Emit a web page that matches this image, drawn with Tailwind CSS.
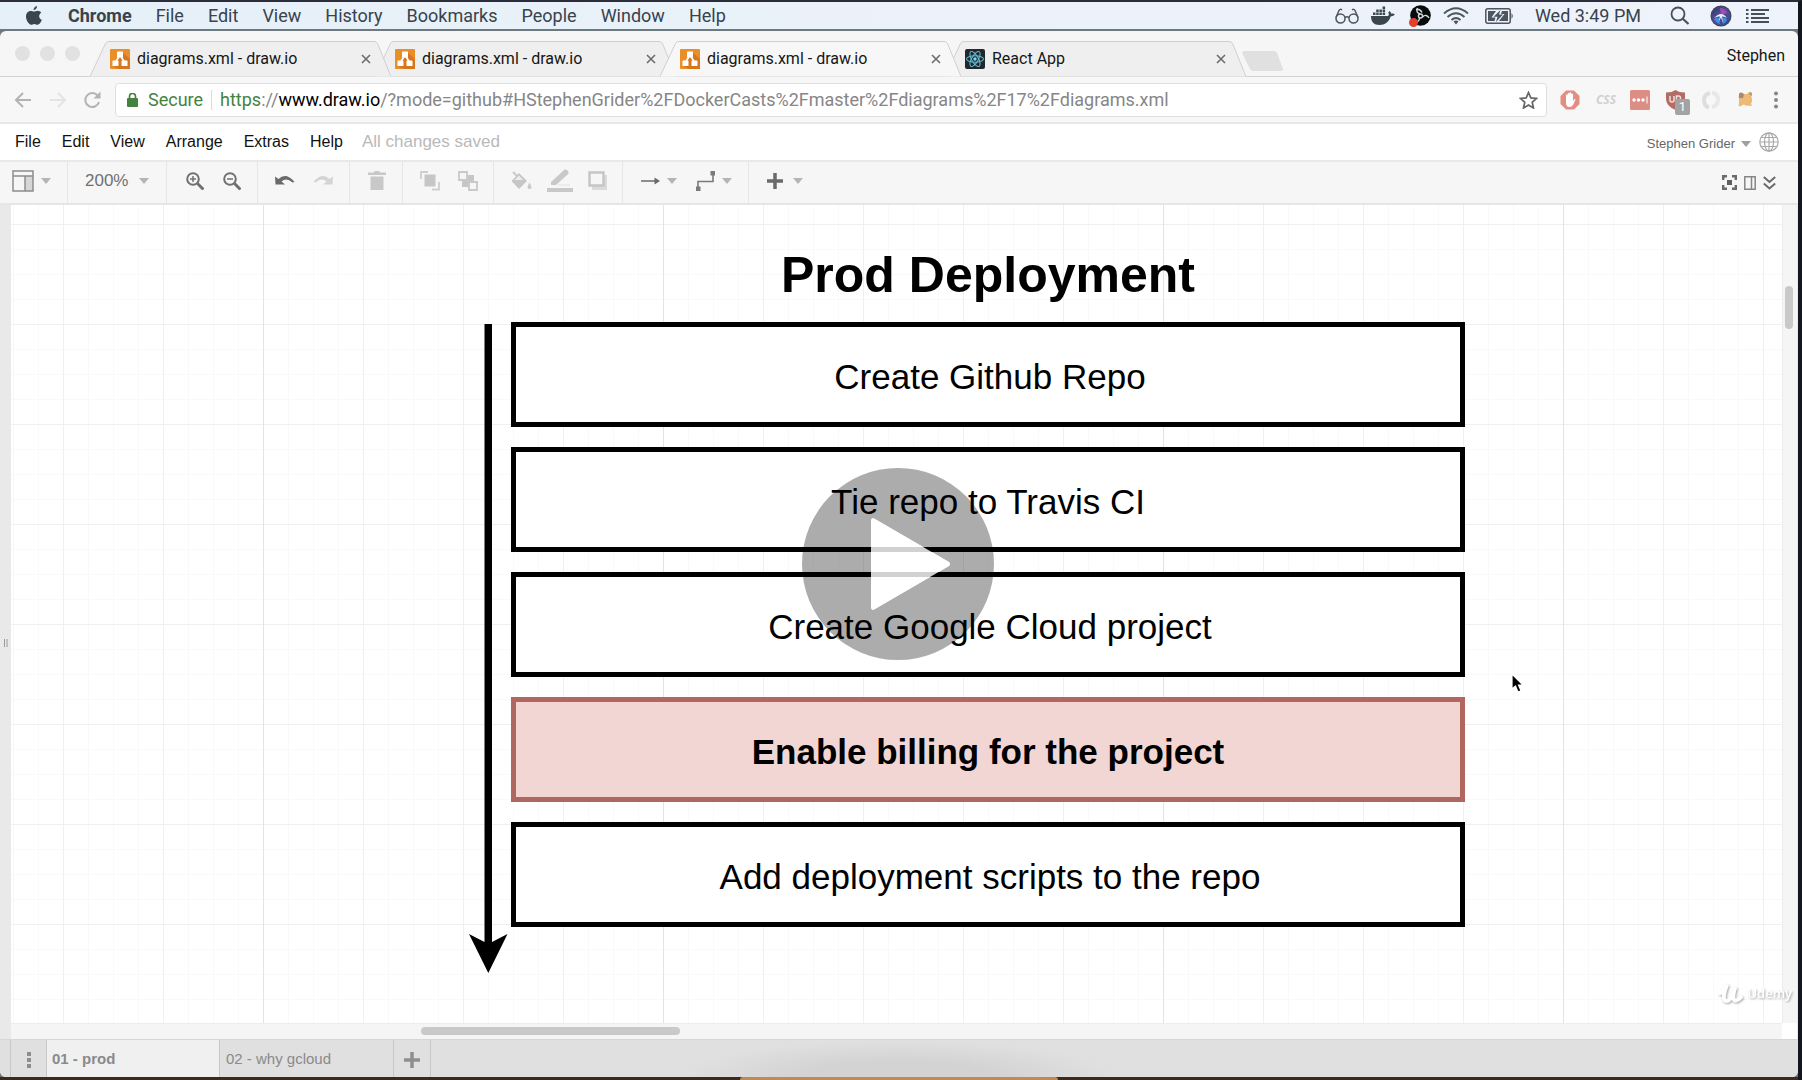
<!DOCTYPE html>
<html lang="en">
<head>
<meta charset="utf-8">
<title>diagrams.xml - draw.io</title>
<script src="https://cdn.jsdelivr.net/npm/@tailwindcss/browser@4"></script>
</head>
<body class="bg-[#12161d]">
<svg class="hidden" aria-hidden="true">
  <defs>
    <symbol id="caret" viewBox="0 0 10 6"><path d="M0 0h10L5 6z" fill="currentColor"/></symbol>
    <symbol id="close" viewBox="0 0 10 10"><path d="M1 1l8 8M9 1l-8 8" stroke="#6b6b6b" stroke-width="1.6"/></symbol>
    <symbol id="drawio" viewBox="0 0 20 20">
      <rect width="20" height="20" rx="1" fill="#ea8e28"/>
      <path d="M12 3l8 7v10H9l-6-3z" fill="#d8761d"/>
      <path d="M10 6L5 14M10 6l5 8" stroke="#fff" stroke-width="1.8"/>
      <rect x="7" y="2.500" width="6" height="6" rx=".6" fill="#fff"/><rect x="2.500" y="11.500" width="6" height="5.500" rx=".6" fill="#fff"/><rect x="11.500" y="11.500" width="6" height="5.500" rx=".6" fill="#fff"/>
    </symbol>
    <symbol id="tab" viewBox="0 0 301 36">
      <path d="M0 35.500L15.500 2.500Q16.500 .5 19 .5H284Q286.500 .5 287.500 2.500L301 35.500" fill="currentColor" stroke="#cfcfcf"/>
    </symbol>
  </defs>
</svg>
<div class="flex min-h-screen flex-col border-t-2 border-r-4 border-t-[#2b2e3a] border-r-[#12161d] bg-[#6c7a80]">

  <!-- System menu bar -->
  <header class="flex h-[27px] items-center bg-linear-to-r from-[#e6f0f8] to-[#eff3fb] pr-7 pl-[26px] font-['Roboto',sans-serif] text-[18px] leading-6 text-[#37434d]">
    <svg class="mr-[26px] h-5 w-4 shrink-0" viewBox="0 0 16 20" fill="#3a464e"><path d="M11 0c.2 2-1.400 4-3.400 4C7.400 2.200 9 .3 11 0zM8 5.600C9 5.600 10 4.800 11.800 4.800c1.300 0 2.600.7 3.400 1.900-3 1.700-2.500 5.900.6 7-.7 2-2.300 5-4.300 5-1.300 0-1.700-.8-3.200-.8s-2 .8-3.200.8C2.800 18.700 0 14.300 0 10.600 0 7 2.200 4.900 4.600 4.900 6 4.900 7.100 5.600 8 5.600z"/></svg>
    <nav class="flex gap-6">
      <button class="font-bold">Chrome</button><button>File</button><button>Edit</button><button>View</button><button>History</button><button>Bookmarks</button><button>People</button><button>Window</button><button>Help</button>
    </nav>
    <div class="ml-auto flex items-center">
      <svg class="mr-3 h-4 w-6" viewBox="0 0 24 16" fill="none" stroke="#4c5560" stroke-width="1.500"><circle cx="5.500" cy="10.500" r="4.500"/><circle cx="18.500" cy="10.500" r="4.500"/><path d="M10 9.500q2-1.500 4 0M1 9.500L4 2.500q1-2 3-.5M23 9.500L20 2.500q-1-2-3-.5"/></svg>
      <svg class="mr-[14px] h-5 w-6" viewBox="0 0 24 20" fill="#3a464e"><path d="M0 10h17c1-.3 1-2.500.3-3.600L18.500 5c1 .7 1.600 1.700 1.800 2.700 1.200-.3 2.500-.2 3.500.6-.8 1.500-2.300 2-4 2C18 16 14 19 8.500 19 3 19 0 16 0 10z"/><path d="M2 6.500h2.500v2.500H2zM5.200 6.500h2.500v2.500H5.200zM8.400 6.500h2.500v2.500H8.400zM11.600 6.500h2.500v2.500h-2.500zM5.200 3.500h2.500V6H5.200zM8.400 3.500h2.500V6H8.400zM11.600 3.500h2.500V6h-2.500zM11.600 .5h2.500V3h-2.500z"/></svg>
      <svg class="mr-3 h-[22px] w-[22px]" viewBox="0 0 22 22"><circle cx="11.500" cy="10.500" r="10.300" fill="#080a0c"/><g fill="none" stroke="#d6dce2" stroke-width="1.400"><circle cx="11.500" cy="11" r="2"/><path d="M11 9c-3-1-4-3-2.500-6M13.500 12c2.500-2.500 5-2 6.500 1M10.500 13c0 3-2 4.500-5 3.500M7 4.500q4-1 6 3"/></g><circle cx="4.500" cy="17.500" r="4.500" fill="#e3402c"/></svg>
      <svg class="mr-4 h-[18px] w-[26px]" viewBox="0 0 26 18" fill="none" stroke="#4c5560" stroke-width="1.800"><path d="M1 6.500Q13-4 25 6.500M4.500 10Q13 2.500 21.500 10M8.500 13Q13 9 17.500 13"/><path d="M10.500 14.500Q13 12.500 15.500 14.500L13 17.500z" fill="#4c5560" stroke="none"/></svg>
      <svg class="mr-[21px] h-4 w-[29px]" viewBox="0 0 29 16"><rect x=".8" y=".8" width="24.400" height="14.400" rx="2" fill="none" stroke="#4c5560" stroke-width="1.500"/><path d="M3 3h8L6.500 9.500h4l-1 3.500H3zM17 3h6v10h-9l5.500-7h-3.500z" fill="#4c5560"/><path d="M15.500 2L8.500 8.800h4L11 14l7-7.500h-4z" fill="#4c5560"/><path d="M26.500 5q2.500 3 0 6z" fill="#4c5560"/></svg>
      <span class="mr-[29px]">Wed 3:49 PM</span>
      <svg class="mr-5 h-[19px] w-5" viewBox="0 0 20 19" fill="none" stroke="#46505a" stroke-width="1.800"><circle cx="8" cy="8" r="6.500"/><path d="M12.500 12.500l6 5.500" stroke-width="2.200"/></svg>
      <svg class="mr-[14px] h-[22px] w-[22px]" viewBox="0 0 22 22"><defs><linearGradient id="siri" x1="0" y1="0" x2="1" y2="1"><stop offset="0" stop-color="#273a63"/><stop offset=".45" stop-color="#5a4a9a"/><stop offset="1" stop-color="#2b4d8c"/></linearGradient></defs><circle cx="11" cy="11" r="10.500" fill="#3b4654"/><circle cx="11" cy="11" r="9.500" fill="url(#siri)"/><path d="M10 3q5 0 7 5l-6 2z" fill="#a24bb0"/><path d="M4 14q3-2 5-1l1 6q-4-1-6-5zM12 13q4-1 5 2-2 3-4 4z" fill="#3a8fe0"/><path d="M4 13q4-4 7-4t6 4q-3-2-5-1.500l1 6.500-2-5.500L8.500 17 10 11.500Q7 11 4 13z" fill="#e4eeff"/></svg>
      <svg class="h-4 w-6" viewBox="0 0 24 16" fill="#46505a"><path d="M0 1h2.500v2H0zM0 5h2.500v2H0zM0 9h2.500v2H0zM0 13h2.500v2H0zM5 1h18v2H5zM5 5h14v2H5zM5 9h18v2H5zM5 13h18v2H5z"/></svg>
    </div>
  </header>

  <!-- Browser window -->
  <div class="mt-0.5 flex flex-1 flex-col overflow-hidden rounded-t-md rounded-b-md bg-[#f6f6f6]">

    <!-- Browser tabs -->
    <div class="flex h-[46px] items-end border-b border-[#d2d2d2]">
      <div class="flex gap-[10px] self-center pl-[15px]">
        <span class="size-[15px] rounded-full bg-[#e1e1e1]"></span><span class="size-[15px] rounded-full bg-[#e1e1e1]"></span><span class="size-[15px] rounded-full bg-[#e1e1e1]"></span>
      </div>
      <div class="-mb-px ml-[10px] flex font-['Roboto',sans-serif] text-[16px] text-[#161616]">
        <div class="relative z-10 h-9 w-[301px]">
          <svg class="absolute inset-0 h-9 w-[301px] text-[#efefef]"><use href="#tab"/></svg>
          <div class="relative flex h-full items-center pr-5 pl-5"><svg class="mr-[7px] size-5"><use href="#drawio"/></svg><a href="#">diagrams.xml - draw.io</a><button class="ml-auto" aria-label="Close tab"><svg class="size-[10px]"><use href="#close"/></svg></button></div>
        </div>
        <div class="relative -ml-4 h-9 w-[301px]">
          <svg class="absolute inset-0 h-9 w-[301px] text-[#efefef]"><use href="#tab"/></svg>
          <div class="relative flex h-full items-center pr-5 pl-5"><svg class="mr-[7px] size-5"><use href="#drawio"/></svg><a href="#">diagrams.xml - draw.io</a><button class="ml-auto" aria-label="Close tab"><svg class="size-[10px]"><use href="#close"/></svg></button></div>
        </div>
        <div class="relative z-10 -ml-4 h-9 w-[301px]">
          <svg class="absolute inset-0 h-9 w-[301px] text-[#f7f7f7]"><use href="#tab"/></svg>
          <div class="relative flex h-full items-center pr-5 pl-5"><svg class="mr-[7px] size-5"><use href="#drawio"/></svg><a href="#">diagrams.xml - draw.io</a><button class="ml-auto" aria-label="Close tab"><svg class="size-[10px]"><use href="#close"/></svg></button></div>
        </div>
        <div class="relative -ml-4 h-9 w-[301px]">
          <svg class="absolute inset-0 h-9 w-[301px] text-[#efefef]"><use href="#tab"/></svg>
          <div class="relative flex h-full items-center pr-5 pl-5">
            <svg class="mr-[7px] size-5" viewBox="0 0 20 20"><rect width="20" height="20" rx="2" fill="#22272b"/><g fill="none" stroke="#5fb9d0" stroke-width="1.100"><ellipse cx="10" cy="10" rx="8.500" ry="3.300"/><ellipse cx="10" cy="10" rx="8.500" ry="3.300" transform="rotate(60 10 10)"/><ellipse cx="10" cy="10" rx="8.500" ry="3.300" transform="rotate(120 10 10)"/></g><circle cx="10" cy="10" r="1.700" fill="#7fd8ee"/></svg>
            <a href="#">React App</a><button class="ml-auto" aria-label="Close tab"><svg class="size-[10px]"><use href="#close"/></svg></button></div>
        </div>
        <button class="-ml-1 self-center pt-1" aria-label="New tab"><svg class="h-5 w-[41px]" viewBox="0 0 41 20"><path d="M2 0h30q2 0 2.800 1.500l6 16q.7 2.500-1.800 2.500H11q-2 0-3-2L.3 2.500Q0 0 2 0z" fill="#e0e0e0"/></svg></button>
      </div>
      <button class="mr-[13px] mb-2 ml-auto font-['Roboto',sans-serif] text-[16px] leading-6 text-[#161616]">Stephen</button>
    </div>

    <!-- Address bar -->
    <div class="flex h-[47px] items-center border-b-2 border-[#e8e8e8] bg-[#f7f7f7] pl-[14px]">
      <button aria-label="Back"><svg class="h-4 w-[18px]" viewBox="0 0 18 16" fill="none" stroke="#b3b3b3" stroke-width="2"><path d="M17 8H2M9 1L2 8l7 7"/></svg></button>
      <button class="ml-[17px]" aria-label="Forward"><svg class="h-4 w-[18px]" viewBox="0 0 18 16" fill="none" stroke="#e4e4e4" stroke-width="2"><path d="M1 8h15M9 1l7 7-7 7"/></svg></button>
      <button class="ml-4" aria-label="Reload"><svg class="size-[18px]" viewBox="0 0 18 18" fill="none"><path d="M15 5A7 7 0 1 0 16 11" stroke="#b3b3b3" stroke-width="2"/><path d="M17.500 .5v7h-7z" fill="#b3b3b3"/></svg></button>
      <div class="ml-[14px] flex h-[34px] flex-1 items-center rounded border border-[#dedede] bg-white pr-2 pl-[11px] font-['Roboto',sans-serif] text-[18px] whitespace-nowrap text-[#868686]">
        <svg class="h-[14px] w-[11px]" viewBox="0 0 11 14"><rect y="5" width="11" height="9" rx="1" fill="#43833f"/><path d="M2.500 6V3.500a3 3 0 0 1 6 0V6" fill="none" stroke="#43833f" stroke-width="1.700"/></svg>
        <span class="ml-[10px] text-[#43833f]">Secure</span>
        <span class="mx-2 h-5 w-px bg-[#dcdcdc]"></span>
        <a href="#"><span class="text-[#43833f]">https</span>://<span class="text-black">www.draw.io</span>/?mode=github#HStephenGrider%2FDockerCasts%2Fmaster%2Fdiagrams%2F17%2Fdiagrams.xml</a>
        <button class="ml-auto" aria-label="Bookmark"><svg class="h-[18px] w-[19px]" viewBox="0 0 19 18"><path d="M9.500 1.500l2.300 5.400 5.700.5-4.300 3.900 1.300 5.700-5-3-5 3 1.300-5.700L1.500 7.400l5.700-.5z" fill="none" stroke="#666" stroke-width="1.700"/></svg></button>
      </div>
      <div class="ml-[13px] flex items-center pr-[18px]">
        <svg class="size-5" viewBox="0 0 20 20"><path d="M6 .5h8L19.500 6v8L14 19.500H6L.5 14V6z" fill="#e48d83"/><path d="M6 10V5.500q0-1 .8-1t.8 1V4q0-1 .9-1t.9 1v-.8q0-1 .9-1t.9 1V4.500q0-1 .9-1t.9 1V11l1-1.500q1-.8 1.500 0L13 15q-1 2-3.500 2Q6 17 6 13z" fill="#fff"/></svg>
        <span class="ml-4 font-['Noto_Sans',sans-serif] text-[12px] leading-5 font-bold text-[#d0d0d0] italic">CSS</span>
        <svg class="ml-[14px] size-5" viewBox="0 0 20 20"><rect width="20" height="20" rx="1.500" fill="#dc8d84"/><g fill="#fff"><circle cx="4" cy="10" r="1.700"/><circle cx="8.500" cy="10" r="1.700"/><circle cx="13" cy="10" r="1.700"/><path d="M16.500 6.500h1v7h-1z"/></g></svg>
        <span class="relative ml-4 h-5 w-[19px]"><svg class="h-5 w-[19px]" viewBox="0 0 19 20"><path d="M9.500 0Q13 2.500 19 2.500V9q0 7-9.500 11Q0 16 0 9V2.500Q6 2.500 9.500 0z" fill="#b36d66"/><path d="M4 6v4q0 2 2 2t2-2V6M10.500 13V6h2q2 0 2 2t-2 2h-2" fill="none" stroke="#f3dedc" stroke-width="1.500"/></svg><span class="absolute top-[9px] left-[9px] flex h-4 w-[15px] items-center justify-center rounded-xs bg-[#a3a3a3] font-['Roboto',sans-serif] text-[13px] leading-4 text-white">1</span></span>
        <svg class="ml-4 size-5" viewBox="0 0 20 20" fill="none" stroke="#dedede" stroke-width="4"><path d="M9 3Q2.500 4.500 3 10.500T8 17.500"/><path d="M11 2.500Q17.500 4 17 10T11 17" stroke="#e8e8e8"/></svg>
        <svg class="ml-[17px] h-[17px] w-[15px]" viewBox="0 0 15 17"><path d="M2 2q2-1 4 1h3Q11 0 13 1l.5 5q1.500 4-.5 6.500l1 2.500-1.500-.3Q8 15 5.500 13.500L2 15.500Q0 15 1 13V8Q0 4 2 2z" fill="#ecb976"/><path d="M1 3q2-3 5 .5L5 7H1zM13.500 1l.5 4-3-2z" fill="#a58b72"/></svg>
        <button class="ml-[19px]" aria-label="Browser menu"><svg class="h-[18px] w-2" viewBox="0 0 8 18" fill="#868686"><circle cx="4" cy="2.500" r="2"/><circle cx="4" cy="9" r="2"/><circle cx="4" cy="15.500" r="2"/></svg></button>
      </div>
    </div>

    <!-- Editor menus -->
    <div class="flex h-[38px] items-center border-b-2 border-[#e9e9e9] bg-white px-[15px] font-['Liberation_Sans',Arial,sans-serif] text-[16px] leading-5 text-[#111]">
      <nav class="flex gap-[21px]"><button>File</button><button>Edit</button><button>View</button><button>Arrange</button><button>Extras</button><button>Help</button></nav>
      <span class="ml-[19px] text-[17px] text-[#b9b9b9]">All changes saved</span>
      <button class="mt-1 ml-auto flex items-center gap-1.5 text-[13px] text-[#666]">Stephen Grider <svg class="h-1.5 w-[10px] text-[#a0a0a0]"><use href="#caret"/></svg></button>
      <button class="mr-1 ml-2" aria-label="Language"><svg class="size-5" viewBox="0 0 20 20" fill="none" stroke="#a9a9a9" stroke-width="1.200"><circle cx="10" cy="10" r="9.200"/><ellipse cx="10" cy="10" rx="4.500" ry="9.200"/><path d="M10 1v18M1 10h18M2.500 5.500h15M2.500 14.500h15"/></svg></button>
    </div>

    <!-- Editor toolbar -->
    <div class="flex h-[43px] items-stretch border-b-2 border-[#e6e6e6] bg-[#f6f6f6] font-['Liberation_Sans',Arial,sans-serif] text-[17px] text-[#707070]">
      <div class="flex w-[68px] items-center gap-[7px] border-r border-[#e6e6e6] pb-1 pl-3">
        <button aria-label="View"><svg class="size-[22px]" viewBox="0 0 22 22" fill="none" stroke="#8c8c8c" stroke-width="1.500"><rect x="13" y="6" width="8" height="15" fill="#d6d6d6" stroke="none"/><path d="M1 1h20v20H1zM1 6h20M13 6v15"/></svg></button>
        <svg class="h-1.5 w-[10px] text-[#b5b5b5]"><use href="#caret"/></svg>
      </div>
      <div class="flex w-[99px] items-center border-r border-[#e6e6e6] pb-1 pl-[17px]">
        <button class="flex items-center gap-[11px]">200% <svg class="h-1.5 w-[10px] text-[#b5b5b5]"><use href="#caret"/></svg></button>
      </div>
      <div class="flex w-[91px] items-center gap-[19px] border-r border-[#e6e6e6] pb-1 pl-[19px]">
        <button aria-label="Zoom in"><svg class="size-[18px]" viewBox="0 0 18 18" fill="none" stroke="#707070" stroke-width="2"><circle cx="7" cy="7" r="5.800"/><path d="M11.500 11.500l6 6" stroke-width="3"/><path d="M4 7h6M7 4v6" stroke-width="1.500"/></svg></button>
        <button aria-label="Zoom out"><svg class="size-[18px]" viewBox="0 0 18 18" fill="none" stroke="#707070" stroke-width="2"><circle cx="7" cy="7" r="5.800"/><path d="M11.500 11.500l6 6" stroke-width="3"/><path d="M4 7h6" stroke-width="1.500"/></svg></button>
      </div>
      <div class="flex w-[92px] items-center gap-[18px] border-r border-[#e6e6e6] pb-1 pl-[17px]">
        <button aria-label="Undo"><svg class="h-[11px] w-5" viewBox="0 0 20 11"><path d="M0 1.500L3.500 4Q11-3 19.500 7l-2 .5Q11.500 2 6.500 6.500L10 9.500H.5z" fill="#6a6a6a"/></svg></button>
        <button aria-label="Redo"><svg class="h-[11px] w-5" viewBox="0 0 20 11"><path d="M20 1.500L16.500 4Q9-3 .5 7l2 .5Q8.500 2 13.500 6.500L10 9.500H19.500z" fill="#d4d4d4"/></svg></button>
      </div>
      <div class="flex w-[53px] items-center border-r border-[#e6e6e6] pb-1 pl-[18px]">
        <button aria-label="Delete"><svg class="h-[19px] w-[18px]" viewBox="0 0 18 19" fill="#c8c8c8"><path d="M0 1.500h5.500L7 0h4l1.500 1.500H18V4H0zM2.500 5.500h13V19h-13z"/></svg></button>
      </div>
      <div class="flex w-[91px] items-center gap-[18px] border-r border-[#e6e6e6] pb-1 pl-[17px]">
        <button aria-label="To front"><svg class="size-5" viewBox="0 0 20 20"><path d="M4.500 3.500h11v12h-11z" fill="#c6c6c6"/><path d="M1 8V1h7M12 18.500h7V11" fill="none" stroke="#cfcfcf" stroke-width="1.800"/></svg></button>
        <button aria-label="To back"><svg class="size-5" viewBox="0 0 20 20"><path d="M4 4h12v12H4z" fill="#c6c6c6"/><path d="M1 1h8v8H1zM11 11h8v8h-8z" fill="#f6f6f6" stroke="#c9c9c9" stroke-width="1.800"/></svg></button>
      </div>
      <div class="flex w-[129px] items-center gap-[15px] border-r border-[#e6e6e6] pb-1 pl-[17px]">
        <button aria-label="Fill color"><svg class="h-5 w-[21px]" viewBox="0 0 21 20"><path d="M2 1l5 5" stroke="#c9c9c9" stroke-width="2"/><path d="M8 2l8 8-8 8-7.500-8z" fill="#c6c6c6"/><path d="M8 4.500L3.500 9H12z" fill="#ececec"/><path d="M18.500 11.500q4 6.500 0 6.500t0-6.500z" fill="#c9c9c9"/></svg></button>
        <button aria-label="Line color"><svg class="h-[23px] w-[26px]" viewBox="0 0 26 23"><path d="M4 13L15.500 2.500Q18-1 20.500 1.500T20 6L9 16H4z" fill="#c8c8c8"/><path d="M11 16h12" stroke="#e2e2e2"/><path d="M0 19h26v4H0z" fill="#c8c8c8"/></svg></button>
        <button aria-label="Shadow"><svg class="size-[19px]" viewBox="0 0 19 19"><path d="M4 4h15v15H4z" fill="#dadada"/><path d="M1.500 1.500h14v13h-14z" fill="#f6f6f6" stroke="#c6c6c6" stroke-width="2.500"/></svg></button>
      </div>
      <div class="flex w-[126px] items-center gap-[7px] border-r border-[#e6e6e6] pb-1 pl-[17px]">
        <button aria-label="Connection"><svg class="h-2 w-5" viewBox="0 0 20 8"><path d="M1 4h14" stroke="#6a6a6a" stroke-width="1.700"/><path d="M14.500 .5L20 4l-5.500 3.500z" fill="#6a6a6a"/></svg></button>
        <svg class="h-1.5 w-[10px] text-[#b5b5b5]"><use href="#caret"/></svg>
        <button class="ml-3" aria-label="Waypoints"><svg class="h-5 w-[19px]" viewBox="0 0 19 20"><path d="M2 17V10.500h15V3" fill="none" stroke="#7a7a7a" stroke-width="1.600"/><path d="M0 15.500h4.500V20H0zM14.500 0H19v4.500h-4.500z" fill="#7a7a7a"/></svg></button>
        <svg class="h-1.5 w-[10px] text-[#b5b5b5]"><use href="#caret"/></svg>
      </div>
      <div class="flex items-center gap-[10px] pb-1 pl-[18px]">
        <button aria-label="Insert"><svg class="size-4" viewBox="0 0 16 16"><path d="M8 0v16M0 8h16" stroke="#6a6a6a" stroke-width="3.500"/></svg></button>
        <svg class="h-1.5 w-[10px] text-[#b5b5b5]"><use href="#caret"/></svg>
      </div>
      <div class="ml-auto flex items-center gap-[7px] pr-[22px]">
        <button aria-label="Fullscreen"><svg class="size-[15px]" viewBox="0 0 15 15"><path d="M1.200 5V1.200H5M10 1.200h3.800V5M13.800 10v3.800H10M5 13.800H1.200V10" fill="none" stroke="#6a6a6a" stroke-width="2.400"/><path d="M5 5h5v5H5z" fill="#5f5f5f"/></svg></button>
        <button aria-label="Format panel"><svg class="h-[14px] w-3" viewBox="0 0 12 14" fill="none" stroke="#858585" stroke-width="1.500"><path d="M.8 .8h10.400v12.400H.8zM7.500 1v12"/></svg></button>
        <button aria-label="Collapse"><svg class="h-[14px] w-[13px]" viewBox="0 0 13 14" fill="none" stroke="#6a6a6a" stroke-width="2"><path d="M.8 1l5.700 5 5.700-5M.8 7.500l5.700 5 5.700-5"/></svg></button>
      </div>
    </div>

    <!-- Drawing area -->
    <div class="relative flex min-h-[800px] flex-1 bg-[#e9e9e9] pr-px pl-[11px]">
      <svg class="absolute top-[52%] left-1 h-2 w-1" viewBox="0 0 4 8"><path d="M.5 0v8M3 0v8" stroke="#9a9a9a"/></svg>
      <div class="flex min-w-0 flex-1 flex-col">
        <main class="relative flex-1 overflow-hidden bg-white font-['Liberation_Sans',Arial,sans-serif] text-[35px] leading-10 text-black">
          <svg class="absolute inset-0 h-full w-full">
            <defs>
              <pattern id="minor" x="2" y="19" width="25" height="25" patternUnits="userSpaceOnUse"><path d="M.5 0v25M0 .5h25" stroke="#f9f9f9"/></pattern>
              <pattern id="major" x="52" y="19" width="100" height="100" patternUnits="userSpaceOnUse"><path d="M.5 0v100M0 .5h100" stroke="#f0f0f0"/></pattern>
            </defs>
            <rect width="100%" height="100%" fill="url(#minor)"/>
            <rect width="100%" height="100%" fill="url(#major)"/>
            <g fill="#e4e4e4"><rect x="252" width="1" height="100%"/><rect x="652" width="1" height="100%"/><rect x="1152" width="1" height="100%"/><rect x="1552" width="1" height="100%"/></g>
            <path d="M473.500 119h7.500V737l15.500-8L477.300 768 458 729l15.500 8z"/>
          </svg>
          <h1 class="absolute top-[40px] left-[500px] w-[954px] text-center text-[50px] leading-[60px] font-bold">Prod Deployment</h1>
          <div class="absolute top-[117px] left-[500px] flex w-[954px] flex-col gap-5">
            <div class="flex h-[105px] items-center justify-center border-5 border-black bg-white pt-1 pl-1">Create Github Repo</div>
            <div class="flex h-[105px] items-center justify-center border-5 border-black bg-white pt-1">Tie repo to Travis CI</div>
            <div class="flex h-[105px] items-center justify-center border-5 border-black bg-white pt-1 pl-1">Create Google Cloud project</div>
            <div class="flex h-[105px] items-center justify-center border-5 border-[#b0675f] bg-[#f2d6d3] pt-1 font-bold">Enable billing for the project</div>
            <div class="flex h-[105px] items-center justify-center border-5 border-black bg-white pt-1 pl-1">Add deployment scripts to the repo</div>
          </div>
          <svg class="absolute top-[468px] left-[1500px] h-5 w-[13px]" viewBox="0 0 13 20"><path d="M1 1v15l3.500-3 2.500 6 3-1.300L7.500 12H12z" stroke="#fff" stroke-width="1.200"/></svg>
        </main>
        <div class="h-4 border-t border-[#ececec] bg-[#f5f5f5] pt-[3px] pl-[410px]"><div class="h-2 w-[259px] rounded-full bg-[#c9c9c9]"></div></div>
      </div>
      <div class="flex w-[15px] flex-col">
        <div class="flex-1 border-l border-[#ececec] bg-[#f5f5f5] pt-[81px] pl-[2px]"><div class="h-[43px] w-2 rounded-full bg-[#c9c9c9]"></div></div>
        <div class="h-4 bg-white"></div>
      </div>
      <button class="absolute top-[263px] left-1/2 -ml-px size-48 -translate-x-1/2" aria-label="Play">
        <svg class="size-48" viewBox="0 0 192 192"><path fill-rule="evenodd" d="M96 0a96 96 0 1 0 0 192a96 96 0 1 0 0-192zM69 53v86q0 4 3.500 2.200l74-43q3-2.200 0-4.400l-74-43Q69 49 69 53z" fill="#000" fill-opacity=".325"/><path d="M69 53v86q0 4 3.500 2.200l74-43q3-2.200 0-4.400l-74-43Q69 49 69 53z" fill="#fff" fill-opacity=".82"/></svg>
      </button>
      <div class="absolute right-1.5 bottom-9 flex items-center gap-1 font-['Open_Sans',sans-serif] text-[13px] leading-5 font-semibold text-white drop-shadow-[1px_1px_1px_rgb(0_0_0_/_0.35)]">
        <svg class="h-[21px] w-[25px]" viewBox="0 0 26 22" fill="none" stroke="#fff" stroke-width="4" stroke-linecap="round"><path d="M2 12Q8 8 9.500 2.500 6 12 6 16t3 4q5 0 9-14.500-3 10-1.500 13T24 16"/></svg>Udemy
      </div>
    </div>

    <!-- Page tabs -->
    <footer class="relative flex h-[38px] border-t border-[#d6d6d6] bg-[#e0e0e0] pl-[10px] font-['Liberation_Sans',Arial,sans-serif] text-[15px] text-[#8a8a8a]">
      <div class="absolute inset-y-0 left-1/2 w-[440px] -translate-x-1/2 bg-[radial-gradient(ellipse_at_bottom,#d3d3d3_30%,#e0e0e0_70%)]"></div>
      <button class="flex w-[37px] items-center justify-center border-x border-[#c8c8c8] pt-0.5" aria-label="Pages"><svg class="h-4 w-1" viewBox="0 0 4 16" fill="#8e8e8e"><path d="M0 0h4v4H0zM0 6h4v4H0zM0 12h4v4H0z"/></svg></button>
      <button class="w-[173px] border-r border-[#c8c8c8] bg-[#f0f0f0] pt-0.5 pl-[5px] text-left font-bold">01 - prod</button>
      <button class="w-[174px] border-r border-[#c8c8c8] pt-0.5 pl-[6px] text-left">02 - why gcloud</button>
      <button class="flex w-[37px] items-center justify-center border-r border-[#c8c8c8] pt-0.5" aria-label="Insert page"><svg class="size-4" viewBox="0 0 16 16"><path d="M8 0v16M0 8h16" stroke="#8e8e8e" stroke-width="3.500"/></svg></button>
    </footer>
  </div>

  <!-- Desktop and dock edge -->
  <div class="flex h-[3px] justify-center bg-[#3d2a1d]"><div class="w-[318px] rounded-t-sm bg-[#c08a52]"></div></div>
</div>
</body>
</html>
